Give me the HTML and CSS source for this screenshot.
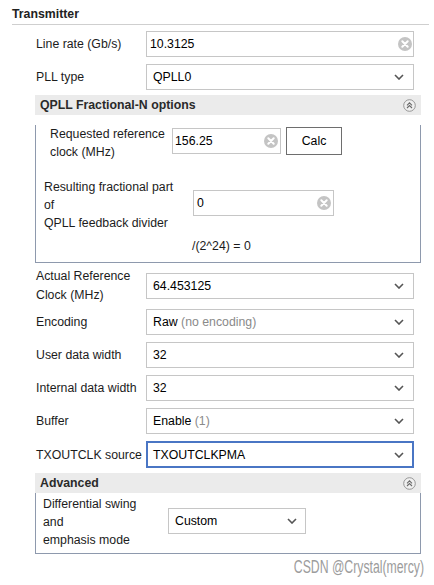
FILE: index.html
```html
<!DOCTYPE html>
<html>
<head>
<meta charset="utf-8">
<link rel="stylesheet" href="styles.css">
</head>
<body>
<div class="panel">
  <div class="panel-title">Transmitter</div>
  <div class="panel-body">
    <div class="row first">
      <div class="lbl">Line rate (Gb/s)</div>
      <div class="field wide text"><span>10.3125</span><svg class="ico" width="14" height="14" viewBox="0 0 14 14"><circle cx="7" cy="7" r="7" fill="#c4c4c4"/><path d="M4.3 4.3L9.7 9.7M9.7 4.3L4.3 9.7" stroke="#fff" stroke-width="2" stroke-linecap="round"/></svg></div>
    </div>
    <div class="row">
      <div class="lbl">PLL type</div>
      <div class="field wide select"><span>QPLL0</span><svg class="ico" width="10" height="6" viewBox="0 0 10 6"><path d="M1 1L5 5L9 1" fill="none" stroke="#555" stroke-width="1.6"/></svg></div>
    </div>

    <div class="group">
      <div class="group-head"><span>QPLL Fractional-N options</span><svg class="ico" width="13" height="13" viewBox="0 0 13 13"><circle cx="6.5" cy="6.5" r="5.8" fill="#f0f0f0" stroke="#8c8c8c" stroke-width="0.9"/><path d="M4 6.3L6.5 3.8L9 6.3M4 9L6.5 6.5L9 9" fill="none" stroke="#6a6a6a" stroke-width="1.1"/></svg></div>
      <div class="group-body">
        <div class="req-row">
          <div class="req-lbl">Requested reference<br>clock (MHz)</div>
          <div class="field req"><span>156.25</span><svg class="ico" width="14" height="14" viewBox="0 0 14 14"><circle cx="7" cy="7" r="7" fill="#c4c4c4"/><path d="M4.3 4.3L9.7 9.7M9.7 4.3L4.3 9.7" stroke="#fff" stroke-width="2" stroke-linecap="round"/></svg></div>
          <div class="calc">Calc</div>
        </div>
        <div class="frac-row">
          <div class="frac-lbl">Resulting fractional part<br>of<br>QPLL feedback divider</div>
          <div class="field frac"><span>0</span><svg class="ico" width="14" height="14" viewBox="0 0 14 14"><circle cx="7" cy="7" r="7" fill="#c4c4c4"/><path d="M4.3 4.3L9.7 9.7M9.7 4.3L4.3 9.7" stroke="#fff" stroke-width="2" stroke-linecap="round"/></svg></div>
        </div>
        <div class="formula">/(2^24) = 0</div>
      </div>
    </div>

    <div class="row m10">
      <div class="lbl two">Actual Reference<br>Clock (MHz)</div>
      <div class="field wide select"><span>64.453125</span><svg class="ico" width="10" height="6" viewBox="0 0 10 6"><path d="M1 1L5 5L9 1" fill="none" stroke="#555" stroke-width="1.6"/></svg></div>
    </div>
    <div class="row m10">
      <div class="lbl">Encoding</div>
      <div class="field wide select"><span>Raw <span class="muted">(no encoding)</span></span><svg class="ico" width="10" height="6" viewBox="0 0 10 6"><path d="M1 1L5 5L9 1" fill="none" stroke="#555" stroke-width="1.6"/></svg></div>
    </div>
    <div class="row">
      <div class="lbl">User data width</div>
      <div class="field wide select"><span>32</span><svg class="ico" width="10" height="6" viewBox="0 0 10 6"><path d="M1 1L5 5L9 1" fill="none" stroke="#555" stroke-width="1.6"/></svg></div>
    </div>
    <div class="row">
      <div class="lbl">Internal data width</div>
      <div class="field wide select"><span>32</span><svg class="ico" width="10" height="6" viewBox="0 0 10 6"><path d="M1 1L5 5L9 1" fill="none" stroke="#555" stroke-width="1.6"/></svg></div>
    </div>
    <div class="row">
      <div class="lbl">Buffer</div>
      <div class="field wide select"><span>Enable <span class="muted">(1)</span></span><svg class="ico" width="10" height="6" viewBox="0 0 10 6"><path d="M1 1L5 5L9 1" fill="none" stroke="#555" stroke-width="1.6"/></svg></div>
    </div>
    <div class="row tall">
      <div class="lbl">TXOUTCLK source</div>
      <div class="field wide select focus"><span>TXOUTCLKPMA</span><svg class="ico" width="10" height="6" viewBox="0 0 10 6"><path d="M1 1L5 5L9 1" fill="none" stroke="#555" stroke-width="1.6"/></svg></div>
    </div>

    <div class="group">
      <div class="group-head"><span>Advanced</span><svg class="ico" width="13" height="13" viewBox="0 0 13 13"><circle cx="6.5" cy="6.5" r="5.8" fill="#f0f0f0" stroke="#8c8c8c" stroke-width="0.9"/><path d="M4 6.3L6.5 3.8L9 6.3M4 9L6.5 6.5L9 9" fill="none" stroke="#6a6a6a" stroke-width="1.1"/></svg></div>
      <div class="group-body">
        <div class="adv-row">
          <div class="adv-lbl">Differential swing<br>and<br>emphasis mode</div>
          <div class="field adv"><span>Custom</span><svg class="ico" width="10" height="6" viewBox="0 0 10 6"><path d="M1 1L5 5L9 1" fill="none" stroke="#555" stroke-width="1.6"/></svg></div>
        </div>
      </div>
    </div>
  </div>
  <div class="watermark"><span>CSDN @Crystal(mercy)</span></div>
</div>
</body>
</html>
```

FILE: styles.css
```css
body {
  margin: 0;
  background: #ffffff;
  font-family: "Liberation Sans", Arial, sans-serif;
  font-size: 12.3px;
  color: #1c1c1c;
}

.panel {
  margin-left: 12px;
  width: 417px;
}

.panel-title {
  font-weight: bold;
  line-height: 18px;
  padding: 5px 0 1px;
  border-bottom: 1px solid #cfcfcf;
  color: #222222;
}

.panel-body {
  margin-left: 23px;
  width: 386px;
}

.row {
  display: flex;
  align-items: center;
  height: 26px;
  margin-top: 7px;
  padding-left: 1px;
}

.row.first { margin-top: 6px; }
.row.m10 { margin-top: 10px; }
.row.tall { height: 27px; }

.lbl {
  width: 110px;
  flex: none;
  white-space: nowrap;
}

.lbl.two { line-height: 19px; }

.field {
  box-sizing: border-box;
  height: 26px;
  border: 1px solid #c6c6c6;
  background: #ffffff;
  display: flex;
  align-items: center;
  justify-content: space-between;
  color: #000000;
  flex: none;
  white-space: nowrap;
}

.field.wide { width: 268px; }
.field.text { padding: 0 1px 0 3px; }
.field.select { padding: 0 9px 0 6px; }

.field.focus {
  height: 27px;
  border: 2px solid #4a76c4;
  padding: 0 8px 0 5px;
}

.ico { display: block; flex: none; }

.muted { color: #8a8a8a; }

.group { margin-top: 5px; }

.group-head {
  box-sizing: border-box;
  height: 20px;
  background: #ebebeb;
  display: flex;
  align-items: center;
  justify-content: space-between;
  padding: 0 5px 0 5px;
  font-weight: bold;
  color: #2a2a2a;
}

.group-body {
  border: 1px solid #8e99ad;
  border-top: none;
}

.req-row {
  display: flex;
  align-items: flex-start;
  margin-top: 10px;
  padding-left: 14px;
}

.req-lbl {
  width: 122px;
  flex: none;
  line-height: 18px;
  white-space: nowrap;
}

.field.req {
  width: 109px;
  margin-top: 3px;
  padding: 0 2px 0 2px;
}

.calc {
  box-sizing: border-box;
  width: 56px;
  height: 28px;
  margin: 2px 0 0 5px;
  border: 1px solid #6e6e6e;
  background: #ffffff;
  display: flex;
  align-items: center;
  justify-content: center;
  color: #000000;
}

.frac-row {
  display: flex;
  align-items: flex-start;
  margin-top: 17px;
  padding-left: 8px;
}

.frac-lbl {
  width: 149px;
  flex: none;
  line-height: 18px;
  white-space: nowrap;
}

.field.frac {
  width: 141px;
  margin-top: 12px;
  padding: 0 2px 0 3px;
}

.formula {
  margin-top: 5px;
  padding-left: 156px;
  padding-bottom: 7px;
  line-height: 18px;
}

.adv-row {
  display: flex;
  align-items: flex-start;
  padding: 2px 0 4px 7px;
}

.adv-lbl {
  width: 125px;
  flex: none;
  line-height: 18px;
  white-space: nowrap;
}

.field.adv {
  width: 138px;
  margin-top: 13px;
  padding: 0 8px 0 6px;
}

.watermark {
  text-align: right;
  padding-right: 5px;
  margin-top: 2px;
  font-size: 17.5px;
  line-height: 22px;
  color: #9c9c9c;
}

.watermark span {
  display: inline-block;
  transform: scaleX(0.7);
  transform-origin: right center;
}
```
